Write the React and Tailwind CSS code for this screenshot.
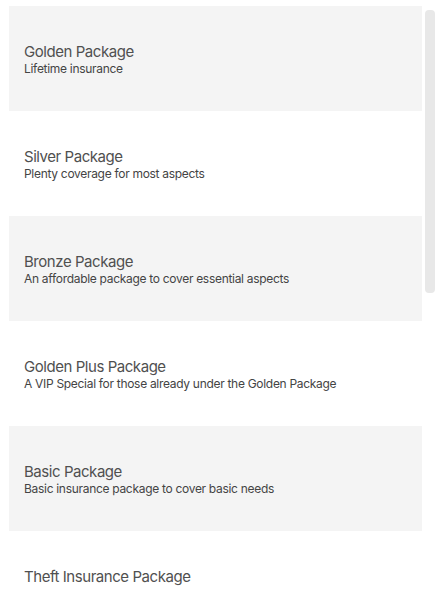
import React from 'react';

const packages = [
  { title: 'Golden Package', desc: 'Lifetime insurance' },
  { title: 'Silver Package', desc: 'Plenty coverage for most aspects' },
  { title: 'Bronze Package', desc: 'An affordable package to cover essential aspects' },
  { title: 'Golden Plus Package', desc: 'A VIP Special for those already under the Golden Package' },
  { title: 'Basic Package', desc: 'Basic insurance package to cover basic needs' },
  { title: 'Theft Insurance Package', desc: '' },
];

function App() {
  return (
    <div className="h-[590px] w-[447px] overflow-hidden bg-white font-['Inter',sans-serif]">
      <div className="flex pt-[6px] pl-[9px]">
        {/* Package list */}
        <div className="flex w-[413px] flex-col">
          {packages.map((pkg, idx) => (
            <div
              key={pkg.title}
              className={`flex h-[105px] shrink-0 flex-col justify-center px-[15px] ${
                idx % 2 === 0 ? 'bg-[#f4f4f4]' : 'bg-white'
              }`}
            >
              <h3 className="text-[15px] leading-[19px] tracking-[-0.03em] text-[#505050]">{pkg.title}</h3>
              <p className="h-[15px] text-[12px] leading-[15px] tracking-[-0.025em] text-[#444444]">{pkg.desc}</p>
            </div>
          ))}
        </div>

        {/* Scrollbar thumb */}
        <div className="ml-[3px] mt-[4px] h-[283px] w-[10px] rounded-[4px] bg-[#e8e8e8]" />
      </div>
    </div>
  );
}

export default App;
